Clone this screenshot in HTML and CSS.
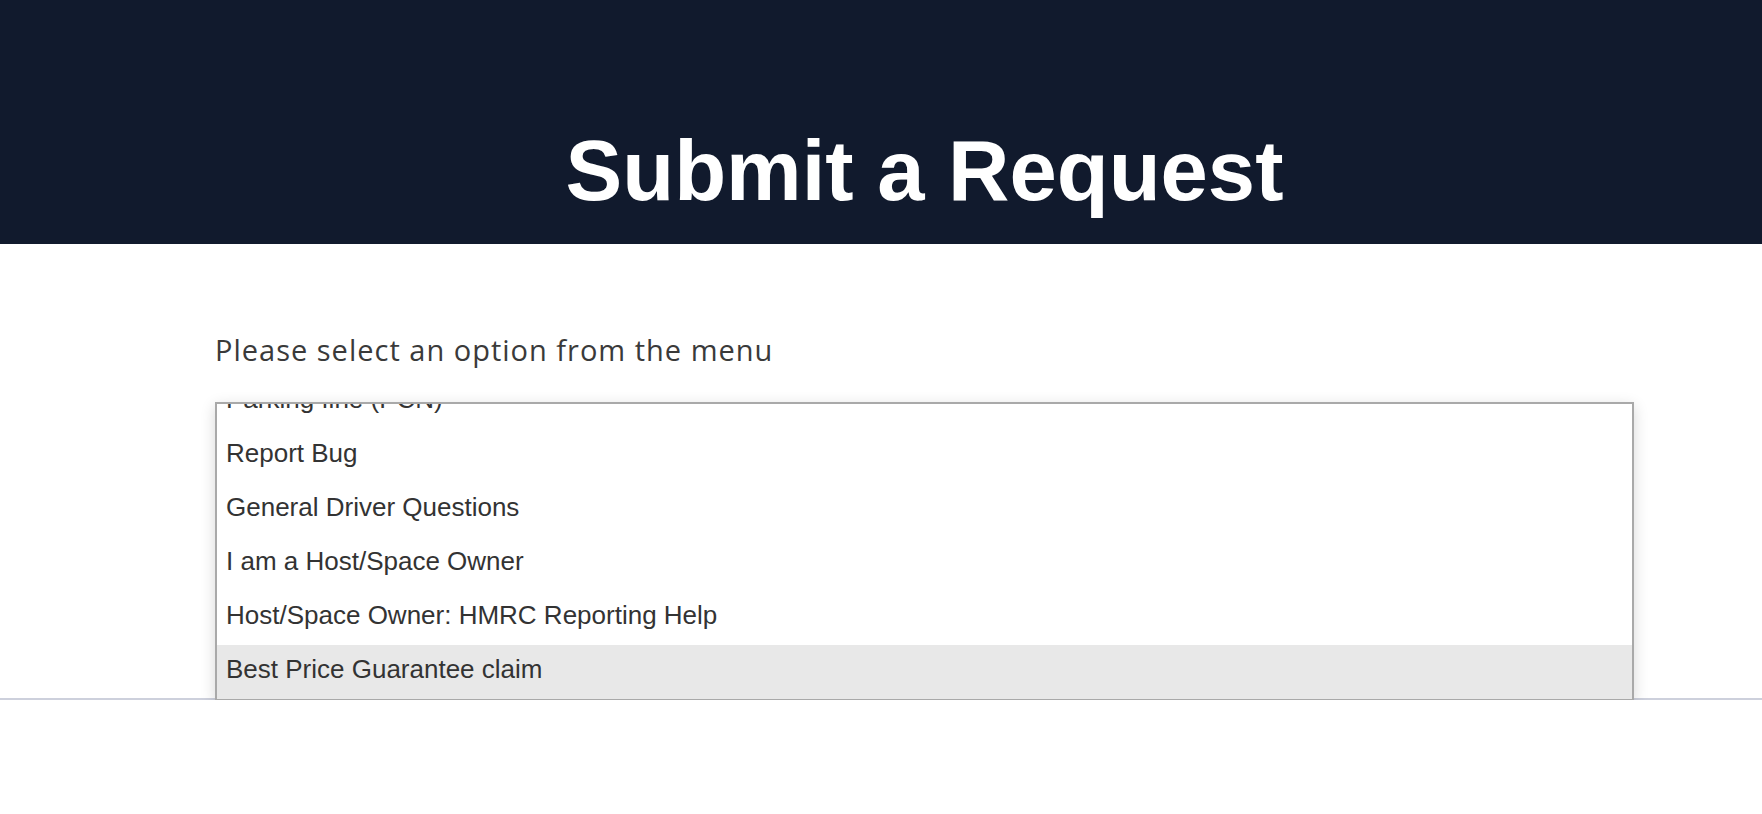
FILE: index.html
```html
<!DOCTYPE html>
<html lang="en">
<head>
  <meta charset="UTF-8" />
  <meta name="viewport" content="width=device-width, initial-scale=1.0"/>
  <title>Submit a Request</title>
  <link rel="stylesheet" href="styles.css">
</head>
<body>

<header class="hero">
  <h1 class="hero-title">Submit a Request</h1>
</header>

<section class="request">
  <div class="request-inner">
    <label class="request-label">Please select an option from the menu</label>
    <div class="listbox">
      <ul class="options">
        <li>Parking fine (PCN)</li>
        <li>Report Bug</li>
        <li>General Driver Questions</li>
        <li>I am a Host/Space Owner</li>
        <li>Host/Space Owner: HMRC Reporting Help</li>
        <li class="active">Best Price Guarantee claim</li>
      </ul>
    </div>
  </div>
</section>

</body>
</html>
```

FILE: styles.css
```css
* {
  box-sizing: border-box;
}

body {
  margin: 0;
  padding: 0;
  background: #fff;
  font-family: 'Liberation Sans', Arial, sans-serif;
}

.hero {
  background: #111a2d;
  padding: 129px 0 31px 87px;
  text-align: center;
}

.hero-title {
  margin: 0;
  color: #fff;
  font-size: 85px;
  line-height: 84px;
  font-weight: 700;
}

.request {
  padding-left: 87px;
  border-bottom: 2px solid #cdd0dc;
}

.request-inner {
  width: 1419px;
  margin: 0 auto;
  padding-top: 88px;
}

.request-label {
  display: block;
  font-family: 'Open Sans', 'Noto Sans', sans-serif;
  font-size: 29px;
  line-height: 36px;
  letter-spacing: 1px;
  color: #3a3a3a;
  margin-bottom: 34px;
}

.listbox {
  position: relative;
  height: 299px;
  margin-bottom: -3px;
  border: 2px solid #a9a9a9;
  background: #fff;
  overflow: hidden;
  box-shadow: 0 4px 14px rgba(0, 0, 0, 0.16);
}

.options {
  list-style: none;
  margin: -29px 0 0;
  padding: 0;
}

.options li {
  padding: 0 10px 6px 9px;
  font-size: 26px;
  line-height: 48px;
  color: #333;
}

.options li.active {
  background: #e8e8e8;
}
```
